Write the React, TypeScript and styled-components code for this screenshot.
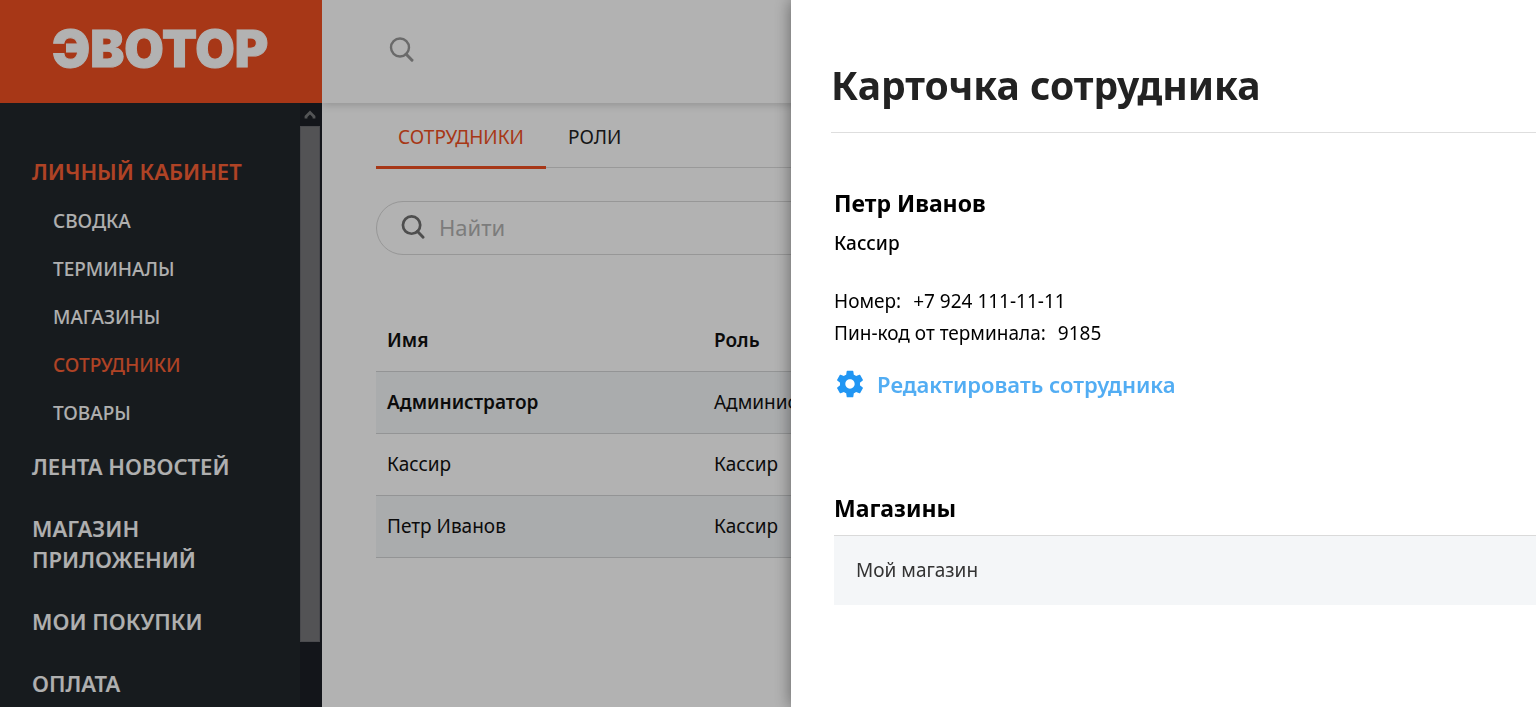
import React from "react";
import styled, { createGlobalStyle } from "styled-components";

const Global = createGlobalStyle`
  * { box-sizing: border-box; }
  html, body, #root { height: 100%; }
  body {
    margin: 0;
    overflow: hidden;
    background: #fff;
    color: #111;
    font-family: "Noto Sans", "Open Sans", sans-serif;
    font-size: 19px;
    line-height: 32px;
  }
  h1, h2, p, ul, dl, dd { margin: 0; padding: 0; }
  ul { list-style: none; }
  a { color: inherit; text-decoration: none; }
  button { border: 0; padding: 0; background: none; font: inherit; color: inherit; cursor: pointer; }
`;

const Page = styled.div`
  display: flex;
  height: 100vh;
  overflow: hidden;
`;

const Sidebar = styled.aside`
  position: relative;
  z-index: 1;
  flex: 0 0 322px;
  display: flex;
  flex-direction: column;
  background: #21282c;
`;

const Logo = styled.a`
  flex: 0 0 103px;
  display: flex;
  align-items: center;
  padding-left: 52px;
  padding-bottom: 6px;
  background: #f05022;
  && { color: #fff; }
  font: 900 51px/60px Inter, sans-serif;
  -webkit-text-stroke: 1px currentColor;
`;

const SidebarBody = styled.div`
  flex: 1;
  min-height: 0;
  display: flex;
`;

const Nav = styled.nav`
  flex: 1;
  padding: 53px 40px 0 32px;
  overflow: hidden;
`;

const NavList = styled.ul`
  display: flex;
  flex-direction: column;
  gap: 31px;
`;

const NavGroup = styled.li<{ $tight?: boolean }>`
  margin-bottom: ${(p) => (p.$tight ? "-17px" : "0")};
`;

const NavLink = styled.a<{ $active?: boolean }>`
  display: block;
  font-size: 22px;
  font-weight: 600;
  line-height: 31px;
  color: ${(p) => (p.$active ? "#fb6036" : "#fbfbfb")};
`;

const SubList = styled.ul`
  padding: 10px 0 0 21px;
`;

const SubLink = styled.a<{ $active?: boolean }>`
  display: block;
  font-size: 19px;
  font-weight: 500;
  line-height: 48px;
  color: ${(p) => (p.$active ? "#fb6036" : "#fbfbfb")};
`;

const Scroll = styled.div`
  flex: 0 0 22px;
  display: flex;
  flex-direction: column;
  padding-right: 2px;
  background: #1c1f26;
`;

const ScrollUp = styled.button`
  flex: 0 0 23px;
  display: grid;
  place-items: center;
  color: #78797c;
`;

const ScrollThumb = styled.div`
  flex: 0 0 85.4%;
  background: #78787a;
  border: 1px solid #6b6b70;
`;

const Main = styled.main`
  flex: 1;
  min-width: 0;
`;

const TopBar = styled.header`
  height: 103px;
  display: flex;
  align-items: center;
  padding: 0 0 4px 67px;
  color: #989898;
  box-shadow: 0 2px 8px rgba(0, 0, 0, 0.18);
`;

const IconButton = styled.button`
  display: grid;
`;

const Content = styled.div`
  padding-left: 54px;
`;

const Tabs = styled.div`
  display: flex;
  height: 65px;
  border-bottom: 1px solid #dcdcdc;
`;

const Tab = styled.button<{ $active?: boolean }>`
  height: 66px;
  padding: 4px 22px 0;
  line-height: 24px;
  border-bottom: 3px solid ${(p) => (p.$active ? "#f05022" : "transparent")};
  && { color: ${(p) => (p.$active ? "#f05022" : "#222")}; }
`;

const SearchBox = styled.label`
  display: flex;
  align-items: center;
  gap: 13px;
  height: 54px;
  margin: 33px 54px 0 0;
  padding: 0 24px 2px;
  border: 1px solid #d8d8d8;
  border-radius: 27px;
  color: #707070;
`;

const SearchInput = styled.input`
  flex: 1;
  min-width: 0;
  border: 0;
  padding: 0;
  outline: 0;
  background: none;
  font: 22px/32px "Noto Sans", sans-serif;
  &::placeholder { color: #b2b2b2; opacity: 1; }
`;

const Staff = styled.table`
  width: calc(100% - 54px);
  margin-top: 54px;
  border-collapse: collapse;
  table-layout: fixed;
  text-align: left;
  th, td {
    height: 62px;
    padding: 0 11px;
    border-bottom: 1px solid #d3d5d6;
  }
  th:first-child { width: 327px; }
  thead th { font-weight: 600; }
  tbody th { font-weight: 400; }
  tbody tr:nth-child(odd) { background: #f4f6f8; }
  tbody tr:first-child th { font-weight: 600; }
`;

const Overlay = styled.div`
  position: fixed;
  inset: 0;
  z-index: 2;
  background: rgba(0, 0, 0, 0.3);
`;

const Drawer = styled.section`
  position: fixed;
  top: 0;
  right: 0;
  bottom: 0;
  z-index: 3;
  width: 48.5%;
  padding-left: 40px;
  background: #fff;
  color: #000;
  box-shadow: 0 0 16px rgba(0, 0, 0, 0.45);
`;

const Title = styled.h1`
  height: 133px;
  padding-top: 59px;
  border-bottom: 1px solid #dedede;
  color: #222;
  font-size: 39px;
  font-weight: 700;
  line-height: 52px;
`;

const DrawerBody = styled.div`
  padding: 54px 0 0 3px;
`;

const Heading = styled.h2`
  font-size: 23px;
  font-weight: 700;
  line-height: 32px;
`;

const Role = styled.p`
  margin: 8px 0 26px;
  font-weight: 500;
`;

const Fact = styled.div`
  display: flex;
  gap: 12px;
`;

const EditLink = styled.button`
  display: flex;
  align-items: center;
  gap: 11px;
  margin: 19px 0 92px;
  font-size: 22px;
  font-weight: 600;
  && { color: #52adf3; }
`;

const Shops = styled.ul`
  margin-top: 11px;
  border-top: 1px solid #dadada;
  background: #f4f6f8;
  color: #333;
`;

const Shop = styled.li`
  padding: 18px 22px 19px;
`;

const SearchIcon = ({ size = 26, thin = false }: { size?: number; thin?: boolean }) => (
  <svg width={size} height={size} viewBox="0 0 26 26" fill="none" stroke="currentColor" aria-hidden="true">
    <circle cx="11" cy="10.500" r="9" strokeWidth={thin ? 2.4 : 2.8} />
    <path d="M17 17 L23 23.200" strokeWidth="3" strokeLinecap="round" />
  </svg>
);

const GearIcon = () => (
  <svg width="32" height="32" viewBox="0 0 24 24" fill="#2196f3" aria-hidden="true">
    <path d="M19.43 12.98c.04-.32.07-.64.07-.98s-.03-.66-.07-.98l2.11-1.65c.19-.15.24-.42.12-.64l-2-3.46c-.12-.22-.39-.3-.61-.22l-2.49 1c-.52-.4-1.08-.73-1.69-.98l-.38-2.65C14.46 2.18 14.25 2 14 2h-4c-.25 0-.46.18-.49.42l-.38 2.65c-.61.25-1.17.59-1.69.98l-2.49-1c-.23-.09-.49 0-.61.22l-2 3.46c-.13.22-.07.49.12.64l2.11 1.65c-.04.32-.07.65-.07.98s.03.66.07.98l-2.11 1.65c-.19.15-.24.42-.12.64l2 3.46c.12.22.39.3.61.22l2.49-1c.52.4 1.08.73 1.69.98l.38 2.65c.03.24.24.42.49.42h4c.25 0 .46-.18.49-.42l.38-2.65c.61-.25 1.17-.59 1.69-.98l2.49 1c.23.09.49 0 .61-.22l2-3.46c.12-.22.07-.49-.12-.64l-2.11-1.65zM12 15.5c-1.93 0-3.5-1.57-3.5-3.5s1.57-3.5 3.5-3.5 3.5 1.57 3.5 3.5-1.57 3.5-3.5 3.5z" />
  </svg>
);

const sections = ["СВОДКА", "ТЕРМИНАЛЫ", "МАГАЗИНЫ", "СОТРУДНИКИ", "ТОВАРЫ"];
const pages = ["ЛЕНТА НОВОСТЕЙ", "МАГАЗИН ПРИЛОЖЕНИЙ", "МОИ ПОКУПКИ", "ОПЛАТА"];
const staff = [
  ["Администратор", "Администратор"],
  ["Кассир", "Кассир"],
  ["Петр Иванов", "Кассир"],
];

export default function App() {
  return (
    <>
      <Global />
      <Page>
        <Sidebar>
          <Logo href="#">ЭВОТОР</Logo>
          <SidebarBody>
            <Nav>
              <NavList>
                <NavGroup $tight>
                  <NavLink href="#" $active>ЛИЧНЫЙ КАБИНЕТ</NavLink>
                  <SubList>
                    {sections.map((name) => (
                      <li key={name}>
                        <SubLink href="#" $active={name === "СОТРУДНИКИ"}>{name}</SubLink>
                      </li>
                    ))}
                  </SubList>
                </NavGroup>
                {pages.map((name) => (
                  <NavGroup key={name}>
                    <NavLink href="#">{name}</NavLink>
                  </NavGroup>
                ))}
              </NavList>
            </Nav>
            <Scroll>
              <ScrollUp aria-label="Прокрутить вверх">
                <svg width="12" height="10" viewBox="0 0 12 10" fill="none" stroke="currentColor" strokeWidth="2.8">
                  <path d="M2 8.500 V6.500 L6 2.500 L10 6.500 V8.500" />
                </svg>
              </ScrollUp>
              <ScrollThumb />
            </Scroll>
          </SidebarBody>
        </Sidebar>
        <Main>
          <TopBar>
            <IconButton aria-label="Поиск"><SearchIcon thin /></IconButton>
          </TopBar>
          <Content>
            <Tabs role="tablist">
              <Tab role="tab" aria-selected $active>СОТРУДНИКИ</Tab>
              <Tab role="tab">РОЛИ</Tab>
            </Tabs>
            <SearchBox>
              <SearchIcon size={25} />
              <SearchInput type="text" placeholder="Найти" aria-label="Найти" />
            </SearchBox>
            <Staff>
              <thead>
                <tr><th scope="col">Имя</th><th scope="col">Роль</th></tr>
              </thead>
              <tbody>
                {staff.map(([name, role]) => (
                  <tr key={name}><th scope="row">{name}</th><td>{role}</td></tr>
                ))}
              </tbody>
            </Staff>
          </Content>
        </Main>
      </Page>
      <Overlay />
      <Drawer role="dialog" aria-labelledby="card-title">
        <Title id="card-title">Карточка сотрудника</Title>
        <DrawerBody>
          <Heading>Петр Иванов</Heading>
          <Role>Кассир</Role>
          <dl>
            <Fact><dt>Номер:</dt><dd>+7 924 111-11-11</dd></Fact>
            <Fact><dt>Пин-код от терминала:</dt><dd>9185</dd></Fact>
          </dl>
          <EditLink><GearIcon />Редактировать сотрудника</EditLink>
          <Heading>Магазины</Heading>
          <Shops><Shop>Мой магазин</Shop></Shops>
        </DrawerBody>
      </Drawer>
    </>
  );
}
